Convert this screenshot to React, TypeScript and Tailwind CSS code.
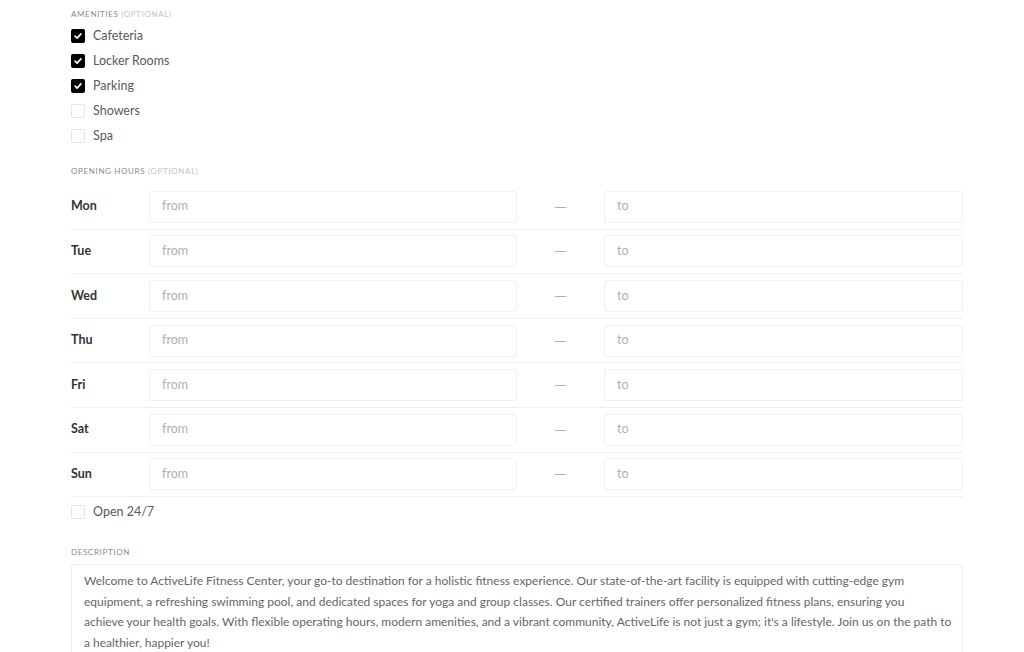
import React from "react";

const amenities = [
  { name: "Cafeteria", checked: true },
  { name: "Locker Rooms", checked: true },
  { name: "Parking", checked: true },
  { name: "Showers", checked: false },
  { name: "Spa", checked: false },
];

const days = ["Mon", "Tue", "Wed", "Thu", "Fri", "Sat", "Sun"];

function Box({ checked }: { checked: boolean }) {
  return checked ? (
    <span className="flex h-[14px] w-[14px] items-center justify-center rounded-[2px] bg-black">
      <svg viewBox="0 0 12 12" className="h-[10px] w-[10px]" fill="none" stroke="white" strokeWidth="2" strokeLinecap="round" strokeLinejoin="round">
        <path d="M2.5 6.2 L5 8.5 L9.5 3.5" />
      </svg>
    </span>
  ) : (
    <span className="block h-[14px] w-[14px] rounded-[2px] border border-[#e6e6e6] bg-white" />
  );
}

function Label({ title, optional }: { title: string; optional?: boolean }) {
  return (
    <div className="text-[8px] uppercase tracking-[0.08em] text-[#8a8a8a] leading-[10px]">
      {title}
      {optional && <span className="text-[#c4c4c4]"> (optional)</span>}
    </div>
  );
}

export default function App() {
  return (
    <div className="min-h-[652px] w-[1024px] bg-white font-['Lato',sans-serif] text-[#555]">
      <div className="ml-[71px] w-[892px] pt-[9px]">
        <Label title="Amenities" optional />
        <div className="mt-[10px] flex flex-col gap-[11px]">
          {amenities.map((a) => (
            <label key={a.name} className="flex h-[14px] items-center gap-[8px]">
              <Box checked={a.checked} />
              <span className="text-[12.5px] text-[#5a5a5a]">{a.name}</span>
            </label>
          ))}
        </div>

        <div className="mt-[23px]">
          <Label title="Opening hours" optional />
        </div>
        <div className="mt-[9px] flex flex-col">
          {days.map((d) => (
            <div key={d} className="flex items-center border-b border-[#efefef] py-[5.8px]">
              <div className="w-[78px] text-[12.5px] font-bold text-[#333]">{d}</div>
              <div className="flex h-[32px] w-[368px] items-center rounded-[3px] border border-[#efefef] px-[12px] text-[12.5px] text-[#b0b0b0]">
                from
              </div>
              <div className="flex w-[87px] justify-center font-['DejaVu_Sans',sans-serif] text-[12px] text-[#b0b0b0]">—</div>
              <div className="flex h-[32px] flex-1 items-center rounded-[3px] border border-[#efefef] px-[12px] text-[12.5px] text-[#b0b0b0]">
                to
              </div>
            </div>
          ))}
        </div>

        <label className="mt-[8px] flex h-[14px] items-center gap-[8px]">
          <Box checked={false} />
          <span className="text-[12.5px] text-[#5a5a5a]">Open 24/7</span>
        </label>

        <div className="mt-[28px]">
          <Label title="Description" />
        </div>
        <div className="mt-[7px] whitespace-nowrap rounded-[3px] border border-[#efefef] pl-[12px] pr-[2px] py-[6px] text-[12px] leading-[20.5px] text-[#666]">
          Welcome to ActiveLife Fitness Center, your go-to destination for a holistic fitness experience. Our state-of-the-art facility is equipped with cutting-edge gym
          <br />
          equipment, a refreshing swimming pool, and dedicated spaces for yoga and group classes. Our certified trainers offer personalized fitness plans, ensuring you
          <br />
          achieve your health goals. With flexible operating hours, modern amenities, and a vibrant community, ActiveLife is not just a gym; it's a lifestyle. Join us on the path to
          <br />
          a healthier, happier you!
        </div>
      </div>
    </div>
  );
}
